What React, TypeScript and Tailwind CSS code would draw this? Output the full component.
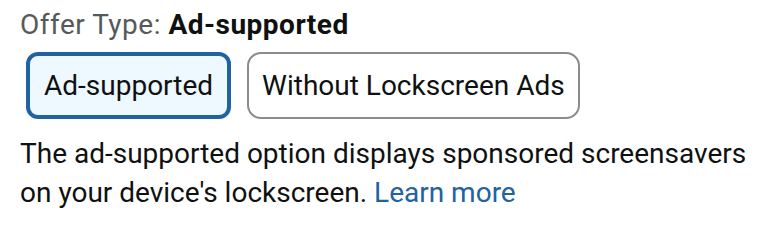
const OfferTypeSelector = () => {
  return (
    <section className="w-[776px] h-[238px] bg-white font-['Roboto',sans-serif] text-[#0f1111] pl-[20px] pt-[5px]">
      {/* Header */}
      <div className="text-[28px] leading-[40px] tracking-[0.5px] whitespace-nowrap">
        <span className="text-[#565959]">Offer Type: </span>
        <span className="font-bold">Ad-supported</span>
      </div>

      {/* Options */}
      <div className="flex gap-[16px] mt-[7px] ml-[6px]">
        <button className="h-[67px] flex items-center px-[14px] border-[4px] border-[#2162a1] rounded-[12px] bg-[#edf8ff] text-[28px] leading-[40px] whitespace-nowrap">
          Ad-supported
        </button>
        <button className="h-[67px] flex items-center px-[13px] border-[2px] border-[#888c8c] rounded-[14px] bg-white text-[28px] leading-[40px] whitespace-nowrap">
          Without Lockscreen Ads
        </button>
      </div>

      {/* Description */}
      <p className="mt-[15px] w-[745px] text-[28px] leading-[39px]">
        The ad-supported option displays sponsored screensavers on your
        device's lockscreen.{" "}
        <a href="#" className="text-[#2162a1]">
          Learn more
        </a>
      </p>
    </section>
  );
};

export default function App() {
  return <OfferTypeSelector />;
}
